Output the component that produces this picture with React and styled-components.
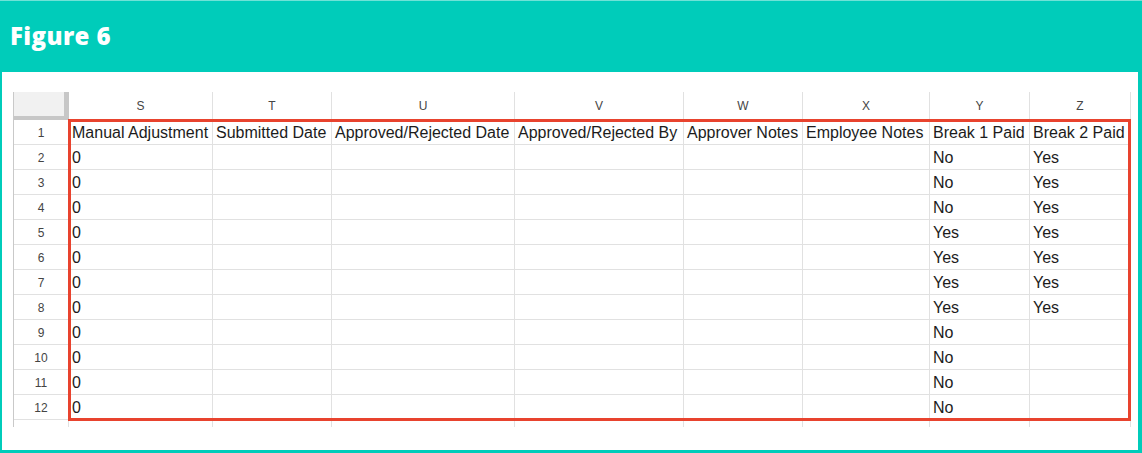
import React from "react";
import styled, { createGlobalStyle } from "styled-components";

const GlobalStyle = createGlobalStyle`
  body {
    margin: 0;
    font-family: "Liberation Sans", Arial, sans-serif;
    background: #fff;
  }
`;

const Frame = styled.div`
  width: 1142px;
  height: 453px;
  box-sizing: border-box;
  background: #00ccba;
  border-top: 1px solid #6fe2d7;
  padding: 0 4px 3px 2px;
  display: flex;
  flex-direction: column;
`;

const Header = styled.div`
  height: 71px;
  display: flex;
  align-items: center;
  padding: 0 0 2px 8px;
  box-sizing: border-box;
  color: #fff;
  font-family: "Open Sans", sans-serif;
  font-weight: 800;
  font-size: 24px;
  letter-spacing: 0.4px;
`;

const Panel = styled.div`
  flex: 1;
  background: #fff;
  padding: 20px 0 0 11px;
`;

const Sheet = styled.div`
  position: relative;
  display: grid;
  grid-template-columns: 55px 144px 119px 183px 169px 119px 127px 100px 101px;
  grid-template-rows: 28px repeat(12, 25px) 7px;
  width: max-content;
  border-left: 1px solid #c9c9c9;
`;

const Cell = styled.div`
  box-sizing: border-box;
  border-right: 1px solid #e1e1e1;
  border-bottom: ${(p) => (p.$last ? "none" : "1px solid #e1e1e1")};
  display: flex;
  align-items: center;
  padding: 2px 3px 0;
  font-size: 16px;
  color: #1c1c1c;
  white-space: nowrap;
  overflow: hidden;
`;

const Corner = styled.div`
  box-sizing: border-box;
  background: #f1f1f1;
  border-right: 5px solid #c7c7c7;
  border-bottom: 4px solid #c7c7c7;
`;

const ColHead = styled(Cell)`
  justify-content: center;
  padding: 0;
  font-size: 12px;
  color: #454545;
`;

const RowHead = styled(Cell)`
  justify-content: center;
  font-size: 12px;
  color: #444;
`;

const Highlight = styled.div`
  position: absolute;
  left: 54px;
  top: 27px;
  width: 1063px;
  height: 302px;
  box-sizing: border-box;
  border: 3px solid #e8432e;
  pointer-events: none;
`;

const columns = ["S", "T", "U", "V", "W", "X", "Y", "Z"];
const headings = [
  "Manual Adjustment",
  "Submitted Date",
  "Approved/Rejected Date",
  "Approved/Rejected By",
  "Approver Notes",
  "Employee Notes",
  "Break 1 Paid",
  "Break 2 Paid",
];
const break1 = ["No", "No", "No", "Yes", "Yes", "Yes", "Yes", "No", "No", "No", "No"];
const break2 = ["Yes", "Yes", "Yes", "Yes", "Yes", "Yes", "Yes", "", "", "", ""];

const rows = [
  headings,
  ...break1.map((b1, i) => ["0", "", "", "", "", "", b1, break2[i]]),
];

export default function App() {
  return (
    <>
      <GlobalStyle />
      <Frame>
        <Header>Figure 6</Header>
        <Panel>
          <Sheet>
            <Corner />
            {columns.map((c) => (
              <ColHead key={c}>{c}</ColHead>
            ))}
            {rows.map((row, r) => (
              <React.Fragment key={r}>
                <RowHead>{r + 1}</RowHead>
                {row.map((val, c) => (
                  <Cell key={c}>{val}</Cell>
                ))}
              </React.Fragment>
            ))}
            <Cell $last />
            {columns.map((c) => (
              <Cell key={c} $last />
            ))}
            <Highlight />
          </Sheet>
        </Panel>
      </Frame>
    </>
  );
}
